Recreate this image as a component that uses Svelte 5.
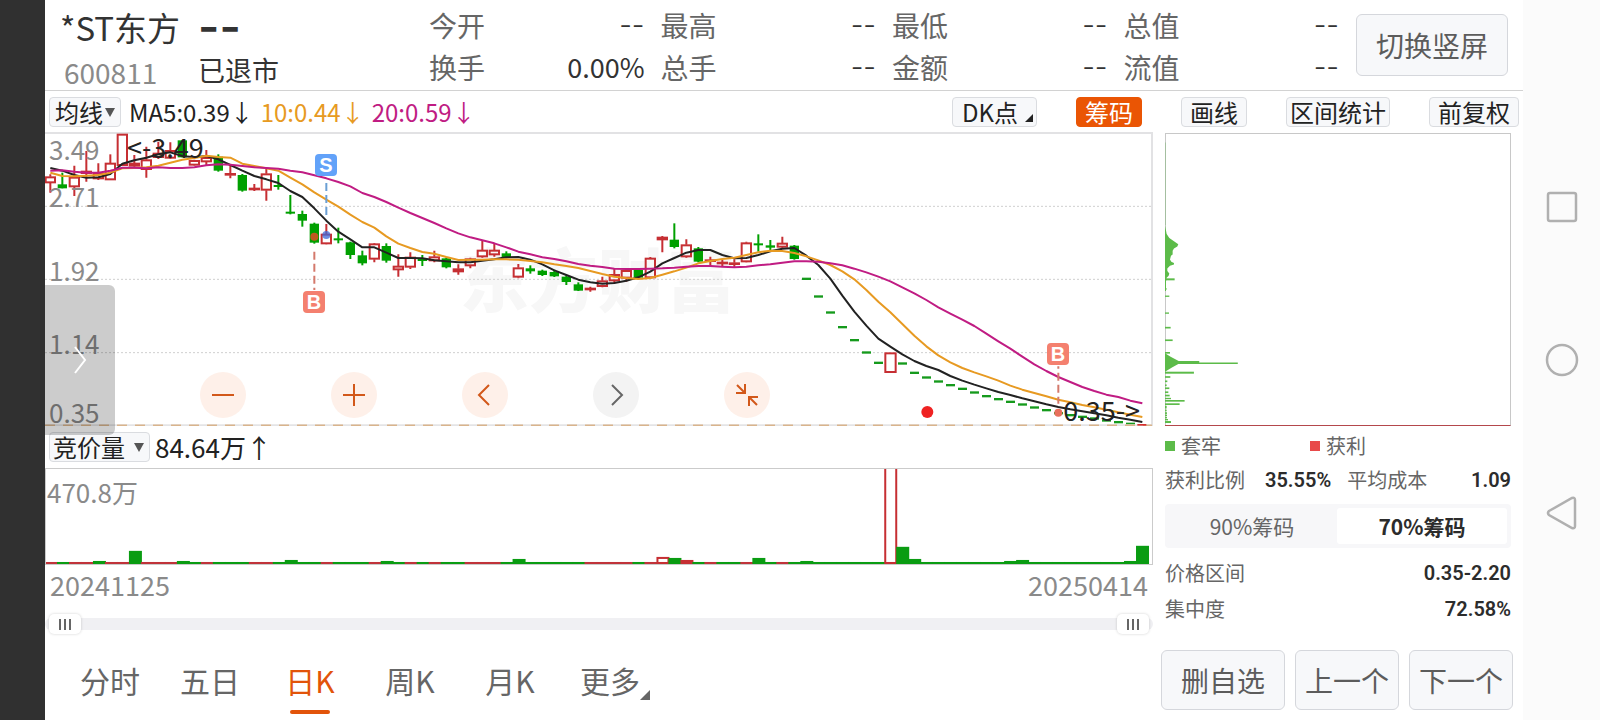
<script>
  const quotes = [
    ['今开', '--'], ['最高', '--'], ['最低', '--'], ['总值', '--'],
    ['换手', '0.00%'], ['总手', '--'], ['金额', '--'], ['流值', '--']
  ];
  const averages = [
    ['MA5:0.39', 'ma5'], ['10:0.44', 'ma10'], ['20:0.59', 'ma20']
  ];
  const tabs = ['分时', '五日', '日K', '周K', '月K', '更多'];
  let activeTab = $state('日K');
  let share = $state('70%筹码');
  let from = $state(0);
  let to = $state(100);

  // Chart units: one trading day is 36 wide, the plot runs from 24 to 903.
  const dayX = (i) => 31 + i * 36;

  // [rising, wick top, body top, body bottom, wick bottom]
  const candles = [
    [1,148,155,174,203],[0,143,178,190,190],[1,122,156,186,213],[1,78,138,146,170],[1,115,144,162,165],
    [1,88,114,165,165],[1,27,27,122,122],[1,90,114,124,128],[1,65,104,134,158],[1,50,84,98,102],
    [1,52,76,100,102],[0,46,46,97,97],[1,104,106,121,122],[1,75,97,111,120],[0,88,95,137,140],
    [1,120,145,151,160],[0,147,150,197,200],[1,177,189,194,198],[1,132,146,196,227],[0,150,180,186,194],
    [0,210,260,266,268],[0,257,267,287,305],[0,293,296,353,356],[1,297,327,357,358],[0,308,340,346,355],
    [0,350,352,390,402],[0,377,391,415,421],[1,354,356,403,412],[0,355,363,407,413],[1,388,423,435,455],
    [1,382,396,427,432],[0,390,401,408,423],[1,377,395,408,412],[0,398,400,427,430],[1,418,431,441,449],
    [1,398,401,423,430],[1,348,375,396,398],[1,355,375,390,395],[0,379,385,396,400],[1,417,428,457,460],
    [0,421,430,439,446],[0,434,437,450,453],[0,434,441,454,456],[0,451,455,471,480],[0,472,478,497,498],
    [1,485,489,494,500],[1,455,467,485,487],[1,430,448,468,475],[1,430,436,460,470],[0,430,435,458,460],
    [1,396,399,459,460],[1,333,336,345,382],[0,295,344,366,370],[1,343,359,396,398],[0,366,370,410,412],
    [1,395,404,410,425],[1,405,411,416,423],[1,403,413,418,427],[1,350,353,411,412],[0,328,355,361,380],
    [0,345,361,368,375],[1,335,354,367,370],[0,360,362,402,404]
  ];
  const dashes = [
    461,514,562,606,645,682,713,null,715,743,757,769,780,791,802,813,822,830,838,847,855,864,870,875,880,886,891,896
  ];
  const ma5 = [
    129,137,150,158,157,147,116,106,98,88,82,93,97,93,103,120,137,153,163,174,198,216,250,287,320,
    343,367,367,383,399,399,400,406,409,412,412,407,403,397,396,404,418,436,450,464,472,476,474,467,457,
    440,415,399,383,375,375,390,400,399,390,379,371,369,392,420,461,512,560,602,641,665,688,708,723,735,
    753,767,779,790,801,810,820,829,838,846,853,859,865,871,878,884,891
  ];
  const ma10 = [
    143,153,154,152,150,143,130,129,127,122,113,104,99,92,96,98,116,123,130,137,158,178,202,224,245,
    269,291,308,334,356,369,381,386,396,405,404,404,403,403,404,408,412,418,423,429,438,447,455,459,462,
    459,449,439,428,415,408,402,398,390,382,377,378,384,394,406,420,439,463,495,530,562,597,632,664,691,
    712,729,742,754,767,782,794,804,814,824,832,840,847,854,862,869,876
  ];
  const ma20 = [
    137,136,140,143,143,137,128,128,130,127,129,129,127,121,118,119,123,127,129,131,137,142,151,160,171,
    184,204,216,231,248,264,279,294,310,325,337,346,355,367,380,388,397,402,409,417,422,426,431,432,432,
    431,430,428,425,423,423,425,427,425,421,418,413,409,409,410,415,421,431,442,455,469,487,505,525,547,
    566,584,603,626,649,671,695,718,738,756,771,786,798,809,816,827,835
  ];
  const line = (values) => values.map((y, i) => `${dayX(i)},${y}`).join(' ');

  // One letter for each day: r rising, g falling.
  const volumeSigns = 'rgrrgrrgrrrggrgggrrggggrgggrggrgrggrrrgggggggrrrrgrrgrgrggrggrggggggggrggggggggggggggggggggg';
  const volumeHeights = { 4: 3, 7: 13, 11: 3, 20: 4, 28: 3, 39: 5, 51: 7, 52: 6, 53: 4, 59: 6, 63: 3, 70: 100, 71: 17, 72: 5, 80: 3, 81: 4, 90: 3, 91: 18 };
  const volumes = [...volumeSigns].map((s, i) => ({ s, h: volumeHeights[i] ?? 2 }));

  // [position, length, thickness] of the thin chip bars
  const chips = [
    [463,29,6],[492,5,4],[514,13,4],[565,12,4],[609,17,5],[647,23,5],[685,15,5],[745,87,6],[758,16,5],
    [771,7,5],[783,5,5],[792,13,5],[804,10,5],[814,14,5],[823,18,4],[830,59,5],[840,44,5],[849,5,8],
    [859,5,5],[867,6,5],[874,6,5],[881,6,4],[887,9,4],[894,18,6]
  ];
</script>

<div class="screen">
  <div class="edge"></div>

  <main>
    <header>
      <div class="names">
        <h1>*ST东方</h1>
        <span class="code">600811</span>
      </div>
      <div class="status">
        <strong>--</strong>
        <span>已退市</span>
      </div>
      <dl class="quotes">
        {#each quotes as [label, value]}
          <div><dt>{label}</dt><dd class:dash={value === '--'}>{value}</dd></div>
        {/each}
      </dl>
      <button class="soft rotate">切换竖屏</button>
    </header>

    <div class="toolbar">
      <label class="pick">
        <select aria-label="均线"><option>均线</option></select>
      </label>
      <div class="averages">
        {#each averages as [text, kind]}
          <span class={kind}>{text}<i>↓</i></span>
        {/each}
      </div>
      <div class="tools">
        <button class="tool dk">DK点<svg width="8" height="8" viewBox="0 0 8 8"><path d="M8 0V8H0Z" fill="#222" /></svg></button>
        <button class="tool on">筹码</button>
        <button class="tool">画线</button>
        <button class="tool wide">区间统计</button>
        <button class="tool">前复权</button>
      </div>
    </div>

    <div class="content">
      <section class="left">
        <div class="kline">
          <span class="watermark">东方财富</span>
          <svg class="plot" viewBox="15 24 3321 879" preserveAspectRatio="none">
            <g stroke="#cfcfcf" stroke-width="3" stroke-dasharray="6 6">
              <path d="M15 244H3336M15 463H3336M15 683H3336" />
            </g>
            {#each candles as [up, high, top, bottom, low], i}
              {#if up}
                <path d="M{dayX(i)} {high}V{top}M{dayX(i)} {bottom}V{low}" stroke="#c62f33" stroke-width="6" />
                <rect x={dayX(i) - 14} y={top + 2} width="28" height={Math.max(bottom - top - 4, 2)} fill={bottom - top < 12 ? '#c62f33' : 'none'} stroke="#c62f33" stroke-width="6" />
              {:else}
                <path d="M{dayX(i)} {high}V{low}" stroke="#00a000" stroke-width="6" />
                <rect x={dayX(i) - 14} y={top} width="28" height={bottom - top} fill="#00a000" />
              {/if}
            {/each}
            {#each dashes as y, i}
              {#if y !== null}
                <rect x={dayX(63 + i) - 13} y={y - 3} width="27" height="7" fill="#159a1c" />
              {/if}
            {/each}
            <rect x={dayX(70) - 15} y="685" width="31" height="56" fill="#fff" stroke="#c62f33" stroke-width="6" />
            <path d="M15 901H3336" stroke="#e4e4e6" stroke-width="6" />
            <path d="M15 901H3336" stroke="#d9b48c" stroke-width="5" stroke-dasharray="30 24" />
            <rect x={dayX(91) - 15} y="897" width="27" height="5" fill="#d62f2f" />
            <g fill="none" stroke-width="6" stroke-linejoin="round">
              <polyline points={line(ma5)} stroke="#222" />
              <polyline points={line(ma10)} stroke="#e79a22" />
              <polyline points={line(ma20)} stroke="#c01c83" />
            </g>
            <path d="M859 174V270" stroke="#6a9fd4" stroke-width="6" stroke-dasharray="24 12" />
            <circle cx="859" cy="330" r="12" fill="#3f6ad8" fill-opacity=".75" />
            <path d="M823 380V495" stroke="#d4796c" stroke-width="6" stroke-dasharray="24 12" />
            <circle cx="823" cy="335" r="12" fill="#c05a20" />
            <path d="M3055 724V836" stroke="#d4796c" stroke-width="6" stroke-dasharray="24 12" stroke-dashoffset="17" />
            <circle cx="3055" cy="863" r="12" fill="#e8705c" />
            <circle cx="2662" cy="861" r="18" fill="#ef2222" />
          </svg>

          <span class="price p1">3.49</span>
          <span class="price p2">2.71</span>
          <span class="price p3">1.92</span>
          <span class="price p4">1.14</span>
          <span class="price p5">0.35</span>
          <span class="mark high">&lt;-3.49</span>
          <span class="mark low">0.35-&gt;</span>
          <span class="flag sell">S</span>
          <span class="flag buy b1">B</span>
          <span class="flag buy b2">B</span>

          <div class="controls">
            <button aria-label="缩小"><svg viewBox="0 0 46 46"><path d="M12 23H34" /></svg></button>
            <button aria-label="放大"><svg viewBox="0 0 46 46"><path d="M12 23H34M23 12V34" /></svg></button>
            <button aria-label="左移"><svg viewBox="0 0 46 46"><path d="M27 13L17 23L27 33" /></svg></button>
            <button aria-label="右移" class="grey"><svg viewBox="0 0 46 46"><path d="M19 13L29 23L19 33" /></svg></button>
            <button aria-label="收起"><svg viewBox="0 0 46 46"><path d="M13 13L21 21M12 21H21V12M33 33L25 25M34 25H25V34" /></svg></button>
          </div>

          <button class="drawer" aria-label="展开"><svg width="14" height="28" viewBox="0 0 14 28"><path d="M2 1L12 14L2 27" fill="none" stroke="#fff" stroke-width="2" /></svg></button>
        </div>

        <div class="indicator">
          <label class="pick gap">
            <select aria-label="竞价量"><option>竞价量</option></select>
          </label>
          <span>84.64万</span><i>↑</i>
        </div>

        <div class="volume">
          <svg class="plot" viewBox="45 468 1107 94" preserveAspectRatio="none">
            {#each volumes as { s, h }, i}
              {#if s === 'r' && h > 3}
                <rect x={45 + i * 12} y={563 - h} width="11" height={h - 2} fill="none" stroke="#c62f33" stroke-width="2" />
              {:else}
                <rect x={44 + i * 12} y={562 - h} width="13" height={h} fill={s === 'r' ? '#c0333a' : '#0a9c12'} />
              {/if}
            {/each}
          </svg>
          <span class="peak">470.8万</span>
        </div>

        <div class="dates"><time>20241125</time><time>20250414</time></div>

        <div class="range">
          <input type="range" aria-label="起始" min="0" max="100" bind:value={from} />
          <input type="range" aria-label="结束" min="0" max="100" bind:value={to} />
        </div>
      </section>

      <aside>
        <svg class="chips" viewBox="45 24 1038 879" preserveAspectRatio="none">
          <path d="M45 24V903" stroke="#c8c8c8" stroke-width="6" />
          <path d="M46 50V300" stroke="#a4bfa0" stroke-width="4" />
          <g fill="#5cbb49">
            <path d="M45 300L47 310L50 326L58 338L72 348L85 357L82 364L72 370L68 377V388L63 392L60 403L64 410L72 414V418L60 422L52 430V438L58 445L56 452L50 458L48 470V498H45Z" />
            <path d="M45 686L62 697L86 710H148V714H264V719H85L66 729L45 742Z" />
            {#each chips as [y, length, thick]}
              <rect x="45" y={y - thick / 2} width={length} height={thick} />
            {/each}
          </g>
        </svg>

        <div class="legend"><span class="green">套牢</span><span class="red">获利</span></div>

        <div class="pair">
          <span>获利比例</span><b>35.55%</b>
          <span class="second">平均成本</span><b class="end">1.09</b>
        </div>

        <div class="segment">
          {#each ['90%筹码', '70%筹码'] as item}
            <button class:active={share === item} onclick={() => (share = item)}>{item}</button>
          {/each}
        </div>

        <div class="fact"><span>价格区间</span><b>0.35-2.20</b></div>
        <div class="fact"><span>集中度</span><b>72.58%</b></div>
      </aside>
    </div>

    <footer>
      <nav class="tabs">
        {#each tabs as tab}
          <button class:active={activeTab === tab} onclick={() => (activeTab = tab)}>
            {tab}
            {#if tab === '更多'}<svg width="10" height="10" viewBox="0 0 10 10"><path d="M10 0V10H0Z" fill="#666" /></svg>{/if}
          </button>
        {/each}
      </nav>
      <div class="actions">
        <button class="soft big">删自选</button>
        <button class="soft">上一个</button>
        <button class="soft">下一个</button>
      </div>
    </footer>
  </main>

  <nav class="system">
    <button aria-label="最近"><svg viewBox="0 0 34 34"><rect x="3" y="3" width="28" height="28" rx="2" /></svg></button>
    <button aria-label="主页"><svg viewBox="0 0 34 34"><circle cx="17" cy="17" r="15" /></svg></button>
    <button aria-label="返回"><svg viewBox="0 0 34 34"><path d="M4 15L27 2Q30 1 30 4V30Q30 33 27 32L4 19Q2 17 4 15Z" /></svg></button>
  </nav>
</div>

<style>
  :global(body) {
    margin: 0;
    background: #fff;
  }
  * {
    box-sizing: border-box;
  }
  .screen {
    display: flex;
    min-height: 100vh;
    font-family: "Noto Sans CJK SC", sans-serif;
    color: #222;
    background: #fff;
  }
  .edge {
    width: 45px;
    background: #303030;
  }
  main {
    flex: 1;
    min-width: 0;
    display: flex;
    flex-direction: column;
  }
  button,
  select {
    font: inherit;
    color: inherit;
    border: 0;
    padding: 0;
    margin: 0;
    background: none;
  }
  i {
    font-style: normal;
  }

  header {
    display: flex;
    height: 91px;
    padding: 0 15px;
    border-bottom: 1px solid #d2d2d2;
  }
  .names {
    width: 138px;
  }
  h1 {
    margin: 7px 0 0;
    font-size: 33px;
    line-height: 40px;
    font-weight: 400;
    color: #333;
    white-space: nowrap;
  }
  .code {
    display: block;
    padding-left: 4px;
    font-size: 28px;
    line-height: 50px;
    color: #8a8a8a;
  }
  .status {
    width: 231px;
  }
  .status strong {
    display: block;
    height: 48px;
    font-family: Inter, sans-serif;
    font-size: 46px;
    line-height: 52px;
    font-weight: 600;
    color: #333;
  }
  .status span {
    display: block;
    font-size: 27px;
    line-height: 44px;
    color: #333;
  }
  .quotes {
    flex: 1;
    display: grid;
    grid-template-columns: repeat(4, 1fr);
    column-gap: 16px;
    grid-auto-rows: 42px;
    margin: 4px 17px 0 0;
    font-size: 28px;
    line-height: 42px;
  }
  .quotes div {
    display: flex;
    justify-content: space-between;
  }
  dt {
    color: #666;
  }
  dd {
    margin: 0;
    font-size: 27px;
    color: #333;
  }
  dd.dash {
    font-family: Inter, sans-serif;
    font-size: 28px;
    font-weight: 300;
  }
  .soft {
    border: 1px solid #d5d7dc;
    border-radius: 6px;
    background: #f7f8fa;
    color: #5c5c5c;
    font-size: 28px;
    line-height: 40px;
    white-space: nowrap;
  }
  .rotate {
    width: 152px;
    height: 62px;
    margin-top: 14px;
  }

  .toolbar {
    display: flex;
    align-items: center;
    height: 41px;
    padding: 0 4px;
    font-size: 24px;
    line-height: 28px;
  }
  .pick {
    position: relative;
    display: flex;
    height: 30px;
    padding: 0 17px 0 5px;
    border: 1px solid #dadce0;
    border-radius: 4px;
    background: #f7f8fa;
  }
  .pick.gap {
    padding: 0 24px 0 3px;
  }
  .pick::after {
    content: "";
    position: absolute;
    right: 5px;
    top: 10px;
    border: 5px solid transparent;
    border-top: 9px solid #555;
    border-bottom: 0;
  }
  .pick select {
    appearance: none;
    font-size: 24px;
    line-height: 28px;
    height: 28px;
  }
  .averages {
    display: flex;
    gap: 7px;
    margin-left: 8px;
  }
  .ma10 {
    color: #e79a22;
  }
  .ma20 {
    color: #c01c83;
  }
  .tools {
    display: flex;
    margin-left: auto;
    gap: 39px;
  }
  .tool {
    height: 30px;
    padding: 0 8px;
    border: 1px solid #dadce0;
    border-radius: 4px;
    background: #f7f8fa;
    white-space: nowrap;
  }
  .tool.on {
    border-color: #ea5504;
    background: #ea5504;
    color: #fff;
  }
  .tool.wide {
    padding: 0 3px;
  }
  .tool.dk {
    padding: 0 3px 0 9px;
  }
  .dk svg {
    margin-left: 7px;
  }

  .content {
    display: grid;
    grid-template-columns: minmax(0, 1fr) 370px;
  }
  .kline {
    position: relative;
    height: 294px;
    border-top: 2px solid #e2e2e4;
    border-right: 2px solid #e2e2e4;
  }
  .plot {
    display: block;
    position: relative;
    width: 100%;
    height: 100%;
  }
  .kline .plot {
    width: calc(100% + 1px);
    height: 293px;
    margin-top: -1px;
  }
  .watermark {
    position: absolute;
    left: 37.5%;
    top: 93px;
    font-size: 69px;
    line-height: 100px;
    font-weight: 900;
    color: #f7f7f7;
  }
  .price,
  .mark,
  .peak {
    position: absolute;
    font-size: 26px;
    line-height: 30px;
    color: #8a8a8a;
  }
  .price {
    left: 4px;
  }
  .p1 { top: 0; }
  .p2 { top: 47px; }
  .p3 { top: 121px; }
  .p4 { top: 194px; }
  .p5 { top: 263px; }
  .mark {
    font-size: 27px;
    color: #222;
  }
  .high {
    left: 82px;
    top: -2px;
  }
  .low {
    right: 11px;
    top: 261px;
  }
  .flag {
    position: absolute;
    width: 22px;
    height: 22px;
    border-radius: 4px;
    font-family: "Liberation Sans", sans-serif;
    font-size: 20px;
    line-height: 22px;
    font-weight: 700;
    text-align: center;
    color: #fff;
    background: #f4806f;
  }
  .sell {
    left: 270px;
    top: 20px;
    background: #62a2f9;
  }
  .b1 {
    left: 258px;
    top: 157px;
  }
  .b2 {
    right: 82px;
    top: 209px;
  }
  .controls {
    position: absolute;
    left: 14%;
    top: 238px;
    display: flex;
    gap: 85px;
  }
  .controls button {
    width: 46px;
    height: 46px;
    border-radius: 50%;
    background: #fef0e9;
  }
  .controls .grey {
    background: #f3f3f3;
  }
  .controls svg {
    display: block;
    fill: none;
    stroke: #d2581a;
    stroke-width: 2;
  }
  .controls .grey svg {
    stroke: #666;
  }
  .drawer {
    position: absolute;
    z-index: 2;
    left: 0;
    top: 151px;
    width: 70px;
    height: 150px;
    border-radius: 0 6px 6px 0;
    background: rgba(0, 0, 0, 0.2);
  }
  .drawer svg {
    display: block;
    margin-left: 28px;
  }

  .indicator {
    display: flex;
    align-items: center;
    height: 42px;
    padding: 0 0 1px 4px;
    font-size: 26px;
    line-height: 30px;
  }
  .indicator span {
    margin-left: 5px;
  }
  .volume {
    position: relative;
    height: 97px;
    border: 1px solid #cbcbcb;
  }
  .peak {
    left: 1px;
    top: 8px;
  }
  .dates {
    display: flex;
    justify-content: space-between;
    padding: 5px 5px 0;
    font-size: 27px;
    line-height: 30px;
    color: #8a8a8a;
  }
  .range {
    position: relative;
    height: 12px;
    margin-top: 18px;
    border-radius: 6px;
    background: #f0f0f3;
  }
  .range input {
    appearance: none;
    position: absolute;
    left: 4px;
    top: -5px;
    width: calc(100% - 8px);
    height: 22px;
    margin: 0;
    background: none;
    pointer-events: none;
  }
  .range input::-webkit-slider-thumb {
    appearance: none;
    width: 32px;
    height: 20px;
    border-radius: 5px;
    pointer-events: auto;
    box-shadow: 0 0 3px rgba(0, 0, 0, 0.18);
    background:
      linear-gradient(#666, #666) 10px 5px / 2px 11px no-repeat,
      linear-gradient(#666, #666) 15px 5px / 2px 11px no-repeat,
      linear-gradient(#666, #666) 20px 5px / 2px 11px no-repeat,
      #fff;
  }

  aside {
    padding: 1px 12px 0;
    font-size: 20px;
    line-height: 28px;
    color: #666;
  }
  .chips {
    display: block;
    width: 100%;
    height: 293px;
    border: 1px solid #c8c8c8;
    border-left: 0;
    border-bottom-color: #b4484c;
  }
  .legend {
    display: flex;
    margin-top: 6px;
  }
  .legend span {
    display: flex;
    align-items: center;
    width: 145px;
  }
  .legend span::before {
    content: "";
    width: 10px;
    height: 10px;
    margin-right: 6px;
    background: #5cbb49;
  }
  .legend .red::before {
    background: #e84a4a;
  }
  .pair {
    display: flex;
    margin-top: 6px;
  }
  b {
    font-family: Roboto, sans-serif;
    font-size: 20px;
    font-weight: 600;
    color: #2c2c2c;
  }
  .pair b {
    margin-left: 20px;
  }
  .second {
    margin-left: 16px;
  }
  .pair .end {
    margin-left: auto;
  }
  .segment {
    display: flex;
    height: 44px;
    margin: 10px 0 11px;
    padding: 4px 4px 4px 2px;
    border-radius: 4px;
    background: #f7f7f9;
  }
  .segment button {
    flex: 1;
    border-radius: 3px;
    font-size: 21px;
    line-height: 30px;
  }
  .segment .active {
    background: #fff;
    color: #2c2c2c;
    font-weight: 700;
  }
  .fact {
    display: flex;
    justify-content: space-between;
    margin-bottom: 8px;
  }

  footer {
    display: flex;
    justify-content: space-between;
    margin-top: auto;
    height: 80px;
    padding: 10px 10px 10px 15px;
  }
  .tabs {
    display: grid;
    grid-template-columns: repeat(6, 100px);
  }
  .tabs button {
    position: relative;
    font-size: 30px;
    line-height: 40px;
    color: #666;
  }
  .tabs .active {
    color: #e2540a;
  }
  .tabs .active::after {
    content: "";
    position: absolute;
    left: 30px;
    bottom: -4px;
    width: 40px;
    height: 4px;
    border-radius: 2px;
    background: #e2540a;
  }
  .tabs svg {
    position: absolute;
    right: 10px;
    bottom: 10px;
  }
  .actions {
    display: flex;
    gap: 10px;
  }
  .actions button {
    width: 104px;
  }
  .actions .big {
    width: 124px;
  }

  .system {
    display: flex;
    flex-direction: column;
    align-items: center;
    justify-content: center;
    gap: 119px;
    width: 77px;
    background: #fbfbfb;
  }
  .system button,
  .system svg {
    display: block;
    width: 34px;
    height: 34px;
  }
  .system svg {
    fill: none;
    stroke: #b0b0b0;
    stroke-width: 2.5;
  }
</style>
